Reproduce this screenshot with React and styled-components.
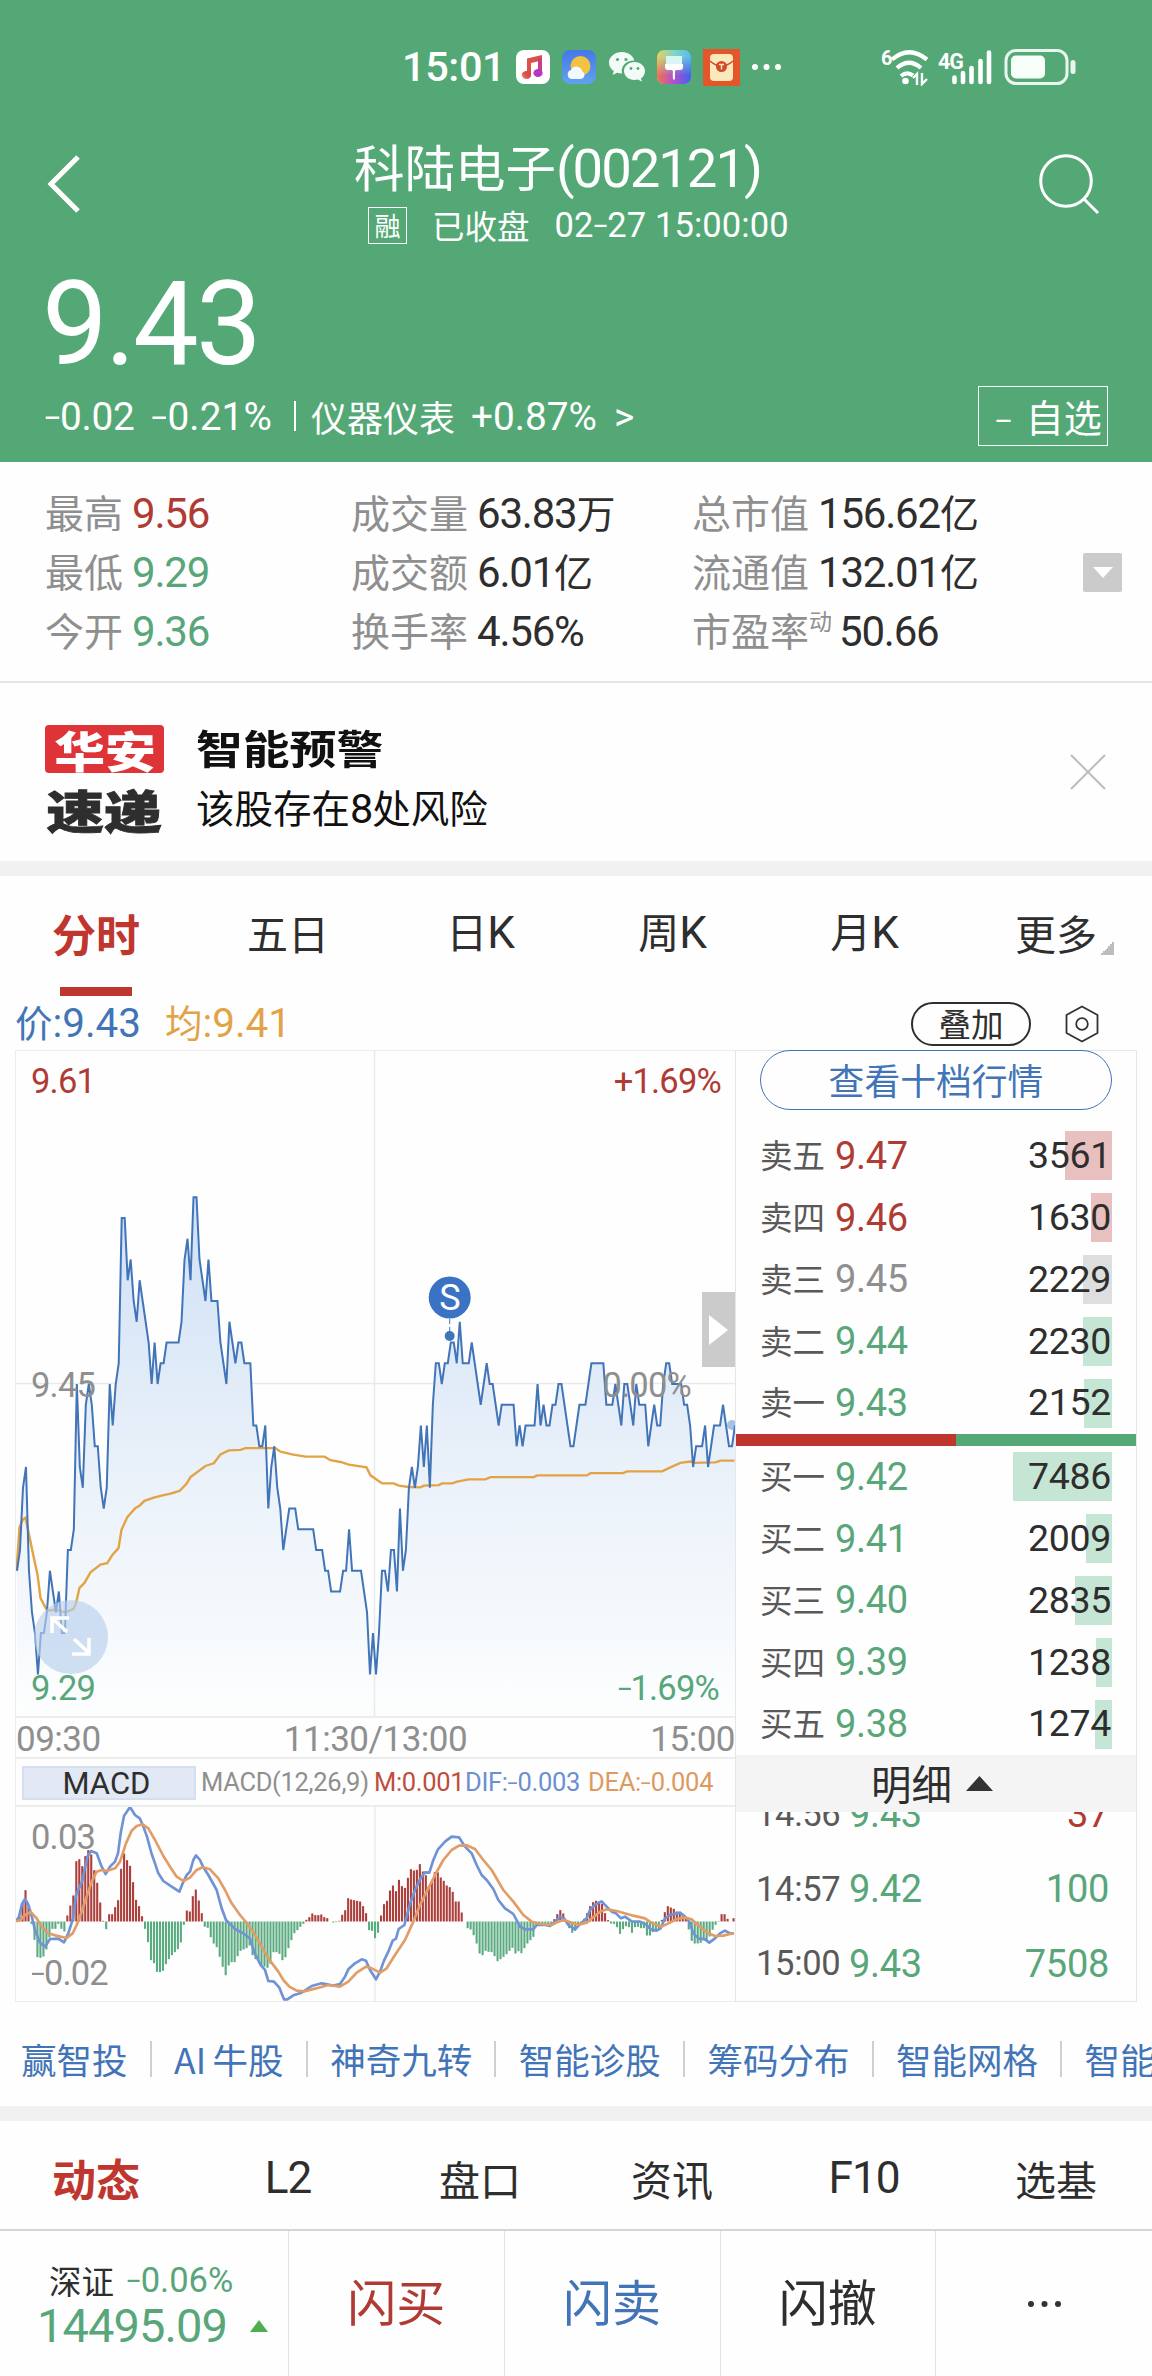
import styled, { createGlobalStyle, css } from "styled-components";

const colors = {
  green: "#53a876",
  greenText: "#58a679",
  red: "#bf362f",
  redText: "#b03a34",
  blue: "#4274b8",
  orange: "#e2a346",
  dark: "#2e2e2e",
  grey: "#8f8f8f",
  line: "#ededed",
};

const GlobalStyle = createGlobalStyle`
  * {
    box-sizing: border-box;
  }
  body {
    margin: 0;
    background: #fefefe;
    color: ${colors.dark};
    font-family: "Noto Sans CJK SC", sans-serif;
    line-height: 1;
    white-space: nowrap;
  }
  svg {
    display: block;
    flex: none;
  }
`;

const Page = styled.div`
  width: 1152px;
  height: 2376px;
  overflow: hidden;
  display: flex;
  flex-direction: column;
`;

const Num = styled.span`
  font-family: Roboto, sans-serif;
  font-size: ${({ $size }) => ($size ? `${$size}px` : "1.077em")};
  letter-spacing: ${({ $ls = 0 }) => $ls}px;
  color: ${({ $color }) => $color || "inherit"};
  font-weight: ${({ $weight }) => $weight || "inherit"};
`;

const Dash = styled.span`
  display: inline-block;
  transform: scale(1.45, 0.85);
  margin: 0 0.06em;
`;

/* ---------- header ---------- */

const Header = styled.header`
  height: 462px;
  background: ${colors.green};
  color: #fff;
`;

const StatusBar = styled.div`
  height: 132px;
  padding: 2px 75px 0 402px;
  display: flex;
  align-items: center;
`;

const Clock = styled.div`
  width: 114px;
  font-family: Roboto, sans-serif;
  font-size: 41.5px;
  font-weight: 500;
  letter-spacing: -0.4px;
`;

const AppIcons = styled.div`
  display: flex;
  align-items: center;
  gap: 12.3px;
`;

const Signals = styled.div`
  margin-left: auto;
  display: flex;
  align-items: center;
`;

const NavBar = styled.div`
  height: 124px;
  padding: 0 52px 0 46px;
  display: flex;
  justify-content: space-between;
`;

const NavIcon = styled.div`
  padding-top: ${({ $top }) => $top}px;
`;

const TitleBlock = styled.div`
  flex: 1;
  padding-left: 273px;
`;

const Title = styled.div`
  height: 71px;
  font-size: 50.5px;
  line-height: 67px;
`;

const SubTitle = styled.div`
  display: flex;
  align-items: center;
  height: 44px;
  padding-left: 14px;
  font-size: 32.5px;
`;

const Badge = styled.span`
  width: 39px;
  height: 37px;
  margin-right: 25px;
  border: 1px solid #fff;
  display: flex;
  align-items: center;
  justify-content: center;
  font-size: 26px;
`;

const SubTime = styled.span`
  margin-left: 25px;
`;

const BigPrice = styled.div`
  height: 124px;
  padding-left: 42px;
  font-family: Roboto, sans-serif;
  font-size: 117px;
  line-height: 136px;
  letter-spacing: -2.8px;
`;

const ChangeRow = styled.div`
  height: 70px;
  padding: 2px 44px 0 45px;
  display: flex;
  align-items: center;
  font-size: 36px;
`;

const ChangeItem = styled.span`
  width: ${({ $w }) => ($w ? `${$w}px` : "auto")};
`;

const Separator = styled.i`
  width: 2px;
  height: 30px;
  margin: 0 15px 0 6px;
  background: #fff;
`;

const WatchButton = styled.div`
  margin-left: auto;
  width: 130px;
  height: 60px;
  padding-left: 11px;
  border: 1px solid #fff;
  display: flex;
  align-items: center;
  justify-content: center;
  gap: 13px;
  font-size: 38px;
`;

/* ---------- stats ---------- */

const Stats = styled.section`
  height: 221px;
  padding: 2px 30px 0 45px;
  border-bottom: 2px solid #e5e5e5;
  display: flex;
  align-items: center;
`;

const StatGrid = styled.div`
  flex: 1;
  display: grid;
  grid-template-columns: 306px 341px auto;
  grid-auto-rows: 59.3px;
  align-items: center;
  font-size: 39px;
`;

const Stat = styled.div`
  display: flex;
  align-items: baseline;
  color: ${({ $color }) => $color || colors.dark};
`;

const StatLabel = styled.span`
  color: ${colors.grey};
  margin-right: ${({ $tight }) => ($tight ? 7 : 9)}px;
`;

const Sup = styled.sup`
  font-size: 23px;
  line-height: 0;
  vertical-align: 16px;
`;

const MoreBox = styled.div`
  width: 39px;
  height: 39px;
  border-radius: 2px;
  background: #cbcbcb;
  display: flex;
  align-items: center;
  justify-content: center;
`;

/* ---------- alert ---------- */

const Alert = styled.section`
  height: 178px;
  padding: 0 46px 0 45px;
  display: flex;
  align-items: center;
`;

const Logo = styled.div`
  width: 119px;
  margin: 15px 32px 0 0;
  font-weight: 900;
`;

const LogoTop = styled.div`
  height: 48px;
  border-radius: 4px;
  background: #df3437;
  color: #fff;
  display: flex;
  align-items: center;
  justify-content: center;
  font-size: 43px;

  span {
    transform: scaleX(1.18);
  }
`;

const LogoBottom = styled.div`
  height: 50px;
  margin-top: 11px;
  display: flex;
  align-items: center;
  justify-content: center;
  font-size: 45px;

  span {
    transform: scaleX(1.28);
    -webkit-text-stroke: 0.8px ${colors.dark};
  }
`;

const AlertText = styled.div`
  flex: 1;
  margin-top: 13px;
  color: #111;
  font-size: 38.5px;
`;

const AlertTitle = styled.div`
  margin-bottom: 20px;
  font-size: 40px;
  font-weight: 700;
  transform: scaleX(1.17);
  transform-origin: left;
`;

const Band = styled.div`
  height: 15px;
  background: #f1f1f1;
`;

/* ---------- tabs ---------- */

const Tabs = styled.nav`
  height: ${({ $h }) => $h}px;
  padding-top: ${({ $pt }) => $pt}px;
  display: grid;
  grid-template-columns: repeat(6, 1fr);
`;

const Tab = styled.div`
  position: relative;
  display: flex;
  align-items: center;
  justify-content: center;
  font-size: 41px;

  ${({ $active }) =>
    $active &&
    css`
      color: ${colors.red};
      font-weight: 700;
      font-size: 44px;
    `}
`;

const Underline = styled.i`
  position: absolute;
  left: 60px;
  bottom: -9px;
  width: 72px;
  height: 9px;
  background: ${colors.red};
`;

const Corner = styled.i`
  position: absolute;
  right: 38px;
  bottom: 32px;
  width: 14px;
  height: 14px;
  background: linear-gradient(135deg, transparent 50%, #bdbdbd 50%);
`;

const QuoteRow = styled.div`
  height: 63px;
  padding: 10px 53px 0 15px;
  display: flex;
  align-items: center;
  font-size: 37.5px;
`;

const Quote = styled.span`
  width: 150px;
  color: ${({ $color }) => $color};
`;

const OverlayPill = styled.div`
  width: 120px;
  height: 44px;
  margin: 0 34px 0 auto;
  border: 2px solid ${colors.dark};
  border-radius: 22px;
  display: flex;
  align-items: center;
  justify-content: center;
  font-size: 32.5px;
`;

/* ---------- chart + book ---------- */

const Board = styled.section`
  height: 952px;
  padding: 0 15px;
  display: flex;
`;

const ChartColumn = styled.div`
  width: 720px;
  border: 1px solid ${colors.line};
  border-width: 1px 0 1px 1px;
  display: flex;
  flex-direction: column;
`;

const ChartBox = styled.div`
  position: relative;
  height: ${({ $h }) => $h}px;
`;

const ChartLabel = styled.span`
  position: absolute;
  left: ${({ $left }) => ($left != null ? `${$left}px` : "auto")};
  right: ${({ $right }) => ($right != null ? `${$right}px` : "auto")};
  top: ${({ $top }) => $top}px;
  font-family: Roboto, sans-serif;
  font-size: 34.5px;
  letter-spacing: -0.8px;
  color: ${({ $color }) => $color || colors.grey};
`;

const TimeAxis = styled.div`
  height: 43px;
  padding-top: 4px;
  border: solid ${colors.line};
  border-width: 2px 0;
  display: flex;
  align-items: center;
  justify-content: space-between;
  font-family: Roboto, sans-serif;
  font-size: 35px;
  letter-spacing: -0.5px;
  color: ${colors.grey};
`;

const MacdRow = styled.div`
  height: 49px;
  padding: 2px 0 0 6px;
  border-bottom: 2px solid ${colors.line};
  display: flex;
  align-items: center;
  font-family: Roboto, sans-serif;
  font-size: 25.5px;
`;

const MacdButton = styled.div`
  width: 174px;
  height: 34px;
  margin: -1px 5px 0 0;
  padding: 1px 5px 0 0;
  border: 2px solid #d5dff0;
  background: #e3e8f5;
  display: flex;
  align-items: center;
  justify-content: center;
  font-size: 31px;
`;

const MacdValue = styled.span`
  width: ${({ $w }) => $w}px;
  letter-spacing: -0.3px;
  color: ${({ $color }) => $color};
`;

const Book = styled.div`
  width: 402px;
  border: 1px solid #e6e6e6;
  display: flex;
  flex-direction: column;
`;

const BookButton = styled.div`
  width: 352px;
  height: 60px;
  margin: -1px 0 15px 24px;
  flex: none;
  border: 1px solid ${colors.blue};
  border-radius: 30px;
  display: flex;
  align-items: center;
  justify-content: center;
  font-size: 35.8px;
  color: ${colors.blue};
`;

const Level = styled.div`
  height: 61.8px;
  padding: 0 24px;
  display: flex;
  align-items: center;
  font-size: 32.5px;
  color: #595959;
`;

const LevelName = styled.span`
  padding-bottom: 3px;
`;

const LevelPrice = styled.span`
  margin-left: 10px;
  font-family: Roboto, sans-serif;
  font-size: 38px;
  letter-spacing: -0.3px;
  color: ${({ $color }) => $color};
`;

const Volume = styled.div`
  margin-left: auto;
  height: 49px;
  padding-right: 1px;
  display: flex;
  align-items: center;
  justify-content: flex-end;
  width: 110px;
  font-family: Roboto, sans-serif;
  font-size: 37.5px;
  letter-spacing: -0.3px;
  color: ${colors.dark};
  background: linear-gradient(${({ $bg }) => `${$bg}, ${$bg}`}) no-repeat right /
    ${({ $w }) => $w}px 100%;
`;

const Ratio = styled.div`
  height: 12px;
  flex: none;
  background: linear-gradient(
    to right,
    ${colors.red} 55%,
    ${colors.green} 55%
  );
`;

const DetailBar = styled.div`
  height: 57px;
  padding-right: 8px;
  flex: none;
  background: #f4f4f4;
  display: flex;
  align-items: center;
  justify-content: center;
  gap: 14px;
  font-size: 40.5px;
`;

const Details = styled.div`
  flex: 1;
  overflow: hidden;
`;

const DetailList = styled.div`
  margin-top: -35px;
`;

const Detail = styled.div`
  height: 74.7px;
  padding: 0 27px 0 20px;
  display: flex;
  align-items: center;
  font-family: Roboto, sans-serif;
  font-size: 38px;
  letter-spacing: -0.3px;
  color: ${colors.greenText};
`;

const DetailTime = styled.span`
  width: 93px;
  font-size: 34.5px;
  color: #595959;
`;

const DetailVolume = styled.span`
  margin-left: auto;
  color: ${({ $color }) => $color};
`;

/* ---------- bottom ---------- */

const Links = styled.nav`
  height: 104px;
  padding: 10px 0 0 21px;
  overflow: hidden;
  display: flex;
  align-items: center;
  font-size: 35.5px;
  color: ${colors.blue};
`;

const LinkItem = styled.span`
  flex: none;
  display: flex;
  align-items: center;
  word-spacing: -1.5px;

  &:not(:last-child)::after {
    content: "";
    width: 2px;
    height: 36px;
    margin: 0 22.3px;
    background: #cfcfcf;
  }
`;

const TradeBar = styled.footer`
  flex: 1;
  border-top: 2px solid #d4d4d4;
  display: grid;
  grid-template-columns: 289px repeat(4, 1fr);
`;

const TradeCell = styled.div`
  padding-bottom: ${({ $pb = 8 }) => $pb}px;
  border-right: 1px solid #e3e3e3;
  display: flex;
  align-items: center;
  justify-content: center;
  font-size: 49px;
  color: ${({ $color }) => $color};

  &:last-child {
    border-right: 0;
  }
`;

const IndexCell = styled.div`
  border-right: 1px solid #e3e3e3;
  padding: 32px 0 0 37px;
`;

const IndexName = styled.div`
  padding-left: 12px;
  height: 34px;
  display: flex;
  align-items: center;
  gap: 13px;
  font-size: 32.5px;
`;

const IndexValue = styled.div`
  height: 56px;
  display: flex;
  align-items: center;

  svg {
    margin: 2px 0 0 23px;
  }
`;

/* ---------- data ---------- */

const stats = [
  ["最高", "9.56", "", colors.redText],
  ["成交量", "63.83", "万"],
  ["总市值", "156.62", "亿"],
  ["最低", "9.29", "", colors.greenText],
  ["成交额", "6.01", "亿"],
  ["流通值", "132.01", "亿"],
  ["今开", "9.36", "", colors.greenText],
  ["换手率", "4.56%", ""],
  ["市盈率", "50.66", "", null, "动"],
];

const tone = {
  up: [colors.redText, "#e8c0c0"],
  flat: [colors.grey, "#dedede"],
  down: [colors.greenText, "#c6e6d5"],
};

const asks = [
  ["卖五", "9.47", "3561", "up", 47],
  ["卖四", "9.46", "1630", "up", 21],
  ["卖三", "9.45", "2229", "flat", 29],
  ["卖二", "9.44", "2230", "down", 29],
  ["卖一", "9.43", "2152", "down", 28],
];

const bids = [
  ["买一", "9.42", "7486", "down", 99],
  ["买二", "9.41", "2009", "down", 26],
  ["买三", "9.40", "2835", "down", 37],
  ["买四", "9.39", "1238", "down", 16],
  ["买五", "9.38", "1274", "down", 17],
];

const details = [
  ["14:56", "9.43", "37", colors.redText],
  ["14:57", "9.42", "100", colors.greenText],
  ["15:00", "9.43", "7508", colors.greenText],
];

// one value a minute, in cents away from 9.45
const ticks = [
  -9, -8, -5, -4, -9, -11, -12, -14, -12, -12, -11, -9, -10, -11, -10, -12,
  -12, -8, -8, -7, 0, -4, -5, -1, 0, -1, -3, -3, -5, -6, -5, 0, -2, 0, 1, 8, 8,
  5, 6, 4, 3, 5, 4, 3, 2, 0, 2, 0, 1, 1, 2, 2, 2, 2, 2, 3, 6, 7, 5, 9, 9, 6, 5,
  4, 6, 4, 4, 4, 2, 1, 0, 3, 2, 1, 2, 2, 1, 1, 1, -2, -2, -3, -3, -2, -6, -4,
  -3, -5, -6, -8, -7, -6, -6, -6, -7, -7, -7, -7, -7, -7, -8, -8, -8, -9, -9,
  -10, -10, -10, -10, -9, -9, -7, -9, -9, -9, -9, -10, -11, -14, -12, -14, -12,
  -9, -9, -10, -8, -8, -10, -6, -9, -8, -5, -4, -5, -4, -2, -4, -2, -5, -1, 1,
  1, 0, 1, 1, 2, 2, 1, 3, 1, 1, 1, 2, 1, 0, -1, 0, 1, 0, 0, -1, -2, -1, -1, -1,
  -1, -1, -3, -2, -3, -2, -2, -2, -2, 0, -2, -1, -2, -2, -1, -1, 0, 0, -1, -2,
  -3, -3, -2, -1, -1, -1, 0, 1, 1, 1, 1, 1, -1, -1, -1, 0, -1, -2, 0, 0, -1,
  -2, 0, -1, -1, -1, -3, -2, -1, -2, -2, 0, 1, 1, 0, 0, 0, 0, -1, -1, -2, -4,
  -3, -3, -3, -2, -4, -3, -2, -2, -2, -1, -2, -3, -3, -2,
];

// average price line, on its own finer grid
const average =
  "48,1186 57,1090 66,1073 75,1068 84,1100 102,1165 111,1195 120,1248 130,1262 140,1276 165,1274 195,1280 220,1272 228,1255 237,1225 252,1214 270,1190 300,1173 320,1170 335,1152 354,1136 363,1095 381,1066 405,1046 417,1041 432,1030 460,1023 480,1019 510,1014 537,1008 558,992 570,977 615,952 640,946 660,926 685,917 720,916 735,912 825,912 840,920 875,926 915,931 972,931 990,939 1020,943 1045,949 1098,955 1110,973 1145,991 1180,991 1195,996 1225,999 1260,1000 1270,996 1315,995 1325,991 1355,991 1370,987 1405,982 1455,982 1470,977 1600,977 1610,973 1760,973 1770,968 1868,968 1880,964 1985,964 2010,955 2040,945 2070,942 2080,945 2145,944 2160,940 2202,940";

const histogram = [
  2, 15, 57, 94, 45, -7, -55, -107, -109, -105, -84, -48, -22, -22, -7, -22,
  -30, 18, 48, 78, 181, 187, 166, 196, 214, 201, 154, 116, 57, 2, -23, 22, 22,
  43, 64, 158, 204, 184, 167, 118, 65, 46, 16, -22, -62, -116, -125, -151,
  -152, -148, -128, -113, -101, -92, -83, -63, -10, 33, 30, 76, 96, 63, 25,
  -16, -19, -47, -66, -77, -106, -136, -161, -132, -122, -122, -104, -88, -84,
  -80, -72, -101, -113, -120, -130, -135, -139, -127, -92, -92, -97, -116,
  -107, -80, -56, -35, -26, -16, -7, 5, 13, 24, 19, 19, 21, 13, 10, 0, -3, -2,
  2, 20, 34, 70, 66, 64, 62, 60, 46, 25, -26, -28, -50, -34, 18, 52, 62, 93,
  108, 91, 125, 106, 101, 131, 157, 153, 155, 172, 150, 139, 105, 120, 148,
  148, 132, 122, 108, 103, 89, 60, 60, 27, 0, -20, -24, -41, -66, -96, -101,
  -88, -91, -92, -104, -119, -113, -106, -98, -88, -79, -96, -89, -95, -80,
  -66, -56, -46, -12, -10, -8, -12, -15, -8, 7, 22, 34, 24, 4, -20, -34, -28,
  -14, -6, 8, 25, 46, 58, 62, 60, 53, 25, 4, -6, -7, -17, -37, -23, -14, -17,
  -34, -17, -16, -20, -20, -42, -42, -32, -28, -22, 5, 28, 46, 42, 38, 30, 27,
  16, 10, -24, -58, -66, -66, -64, -50, -58, -45, -25, -10, 1, 22, 22, 8, 0,
  10,
];

const dif =
  "48,664 57,650 66,612 75,597 84,612 93,640 105,690 120,728 135,740 150,717 175,716 192,727 205,700 219,655 228,585 246,545 262,470 273,453 290,460 305,500 317,522 330,500 345,485 354,460 362,400 372,348 390,321 405,345 420,356 432,385 441,410 455,462 465,490 475,520 490,543 515,560 538,575 548,550 560,525 570,515 580,480 588,466 600,480 610,502 625,525 650,570 665,625 678,660 705,687 730,700 750,716 762,755 782,795 795,810 805,843 822,845 838,863 852,898 862,898 880,886 905,878 935,858 965,850 1000,857 1020,852 1035,830 1045,808 1065,790 1085,778 1098,782 1110,810 1128,838 1140,815 1152,782 1165,755 1178,722 1188,716 1196,687 1213,675 1230,612 1245,570 1260,538 1275,517 1288,518 1300,480 1314,448 1335,425 1355,410 1377,412 1395,440 1415,460 1430,495 1445,525 1460,540 1480,567 1495,600 1515,625 1540,642 1560,680 1575,688 1600,688 1610,675 1635,674 1650,678 1665,665 1680,650 1692,655 1705,675 1725,688 1745,668 1760,655 1770,630 1785,614 1805,604 1820,620 1835,635 1848,640 1863,655 1875,650 1895,664 1920,665 1940,675 1952,688 1970,692 1982,685 1995,655 2010,645 2040,638 2055,650 2068,665 2080,700 2095,715 2115,718 2128,728 2145,715 2160,700 2175,692 2190,700 2202,700";

const dea =
  "48,664 62,660 75,645 92,636 110,655 125,680 145,700 165,706 200,714 218,700 230,675 245,635 260,590 275,545 290,515 305,510 320,513 345,505 360,485 378,430 395,392 410,378 428,373 445,385 465,420 490,468 510,500 530,530 550,543 570,533 590,510 608,502 630,508 655,535 675,570 695,610 720,645 745,675 765,705 785,740 805,775 835,815 850,840 868,860 890,872 912,874 945,866 985,855 1020,860 1045,845 1070,818 1098,800 1115,805 1140,818 1160,805 1185,765 1215,720 1240,665 1260,615 1285,565 1305,525 1330,480 1355,450 1377,437 1400,436 1425,447 1450,480 1475,510 1510,570 1540,605 1570,645 1595,665 1620,672 1655,675 1675,665 1692,660 1715,668 1735,674 1760,668 1780,652 1800,635 1820,628 1850,633 1900,647 1935,655 1960,672 1985,680 2010,668 2030,657 2055,653 2075,658 2100,680 2125,700 2145,708 2170,707 2190,702 2202,700";

const links = [
  "赢智投",
  "AI 牛股",
  "神奇九转",
  "智能诊股",
  "筹码分布",
  "智能网格",
  "智能条件",
];

/* ---------- drawings ---------- */

const MusicIcon = () => (
  <svg width="34" height="34" viewBox="0 0 34 34">
    <defs>
      <linearGradient id="note" x1="0" y1="1" x2="1" y2="0.3">
        <stop offset="0" stopColor="#f6a54b" />
        <stop offset="0.5" stopColor="#e0504f" />
        <stop offset="1" stopColor="#d7493d" />
      </linearGradient>
    </defs>
    <rect width="34" height="34" rx="8" fill="#fff" />
    <path d="M11 8.5 26 5v5.5L15 13v12h-4z" fill="#d9534a" />
    <path d="M22 8h4v15h-4z" fill="#c93f86" />
    <ellipse cx="10.5" cy="25" rx="4.7" ry="4" fill="url(#note)" />
    <ellipse cx="22" cy="23" rx="4.6" ry="4" fill="#b935c0" />
  </svg>
);

const WeatherIcon = () => (
  <svg width="34" height="34" viewBox="0 0 34 34">
    <defs>
      <linearGradient id="sky" x1="0" y1="0" x2="0" y2="1">
        <stop offset="0" stopColor="#4677e6" />
        <stop offset="1" stopColor="#5fa3ee" />
      </linearGradient>
    </defs>
    <rect width="34" height="34" rx="8" fill="url(#sky)" />
    <circle cx="18.5" cy="16" r="10" fill="#f4c243" />
    <path
      d="M10 29a4.6 4.6 0 0 1-1-9 6 6 0 0 1 11.3 1.5A4 4 0 0 1 19 29z"
      fill="#f4f8ff"
    />
  </svg>
);

const WechatIcon = () => (
  <svg width="36" height="30" viewBox="0 0 36 30">
    <path
      d="M13 0C5.8 0 0 4.8 0 10.8c0 3.4 1.9 6.4 4.8 8.3L3.600 23l4.5-2.3c1.5.4 3 .7 4.9.7C11.5 14 17 8.6 25.3 8.6 24.3 3.7 19.2 0 13 0z"
      fill="#f3fbf6"
    />
    <path
      d="M36 19c0-5-4.7-9-10.5-9S15 14 15 19s4.700 9 10.5 9c1.3 0 2.5-.2 3.6-.5L33 29.8l-1-3.3C34.5 24.8 36 22 36 19z"
      fill="#f3fbf6"
    />
    <g fill={colors.green}>
      <circle cx="8.5" cy="7.5" r="1.6" />
      <circle cx="17" cy="7.5" r="1.6" />
      <circle cx="22" cy="16.5" r="1.4" />
      <circle cx="29" cy="16.5" r="1.4" />
    </g>
  </svg>
);

const BrushIcon = () => (
  <svg width="34" height="34" viewBox="0 0 34 34">
    <defs>
      <linearGradient id="paintTop" x1="0" y1="0" x2="1" y2="0">
        <stop offset="0" stopColor="#e9cf5f" />
        <stop offset="0.5" stopColor="#7dd6c5" />
        <stop offset="1" stopColor="#5cb8ef" />
      </linearGradient>
      <linearGradient id="paintLow" x1="0" y1="0" x2="1" y2="0">
        <stop offset="0" stopColor="#f0744f" />
        <stop offset="0.5" stopColor="#b04fd0" />
        <stop offset="1" stopColor="#3f62ee" />
      </linearGradient>
      <linearGradient id="fade" x1="0" y1="0" x2="0" y2="1">
        <stop offset="0.2" stopColor="#fff" stopOpacity="0" />
        <stop offset="0.75" stopColor="#fff" />
      </linearGradient>
      <mask id="lower">
        <rect width="34" height="34" fill="url(#fade)" />
      </mask>
    </defs>
    <rect width="34" height="34" rx="7" fill="url(#paintTop)" />
    <rect width="34" height="34" rx="7" fill="url(#paintLow)" mask="url(#lower)" />
    <path d="M9 6h16v8H9z" fill="#d9f6f4" />
    <path
      d="M8 14h18v3q0 3-3 3h-3.500q-2 0-1.500 3v5q-1 4-2.200 0v-5q.5-3-1.500-3H11q-3 0-3-3z"
      fill="#fff"
    />
  </svg>
);

const EnvelopeIcon = () => (
  <svg width="37" height="37" viewBox="0 0 37 37">
    <rect width="37" height="37" fill="#e4562a" />
    <rect x="7" y="5" width="23" height="27" rx="4" fill="#fbe9bd" />
    <path d="M7 12q11.5 10 23 0" fill="none" stroke="#c94a2b" strokeWidth="1.5" />
    <circle cx="18.5" cy="17.5" r="5.5" fill="#d24a28" />
    <path d="M16 15.500h5M18.500 15.500v5" stroke="#fbe9bd" strokeWidth="1.4" />
  </svg>
);

const Dots = ({ color, gap = 11.5, r = 3 }) => (
  <svg width={gap * 2 + r * 2} height={r * 2}>
    {[0, 1, 2].map((i) => (
      <circle key={i} cx={r + i * gap} cy={r} r={r} fill={color} />
    ))}
  </svg>
);

const SignalIcons = () => (
  <svg width="196" height="38" viewBox="881 47 196 38" fill="none">
    <g
      fill="#fff"
      fontFamily="Roboto, sans-serif"
      fontWeight="700"
      letterSpacing="-1"
    >
      <text x="881" y="64" fontSize="20">
        6
      </text>
      <text x="938" y="68" fontSize="22.5" textLength="25" lengthAdjust="spacingAndGlyphs">
        4G
      </text>
    </g>
    <g stroke="#fff" strokeWidth="4.2">
      <path d="M892 58.500Q909 44 927 58.500" />
      <path d="M897 67Q909 56.500 921 67" />
      <path d="M901 75Q907 70 913 74.500" />
    </g>
    <circle cx="905.500" cy="80" r="3.3" fill="#fff" />
    <path d="M913 77l4-4v11M922 72v11l5-5" stroke="#fff" strokeWidth="2.4" />
    <g stroke="#fff" strokeWidth="4.6" strokeLinecap="round">
      <path d="M954.500 76.500v4.500M963 72v9M971.500 67v14M980.500 60v21M989 51.500V81" />
    </g>
    <rect
      x="1006"
      y="49.5"
      width="61"
      height="33"
      rx="10"
      stroke="#e9f6ee"
      strokeWidth="3"
    />
    <rect x="1011" y="54.5" width="34" height="23" rx="5" fill="#f8fffb" />
    <rect x="1070.5" y="59" width="5" height="14" rx="2.5" fill="#e9f6ee" />
  </svg>
);

const BackIcon = () => (
  <svg width="35" height="58" viewBox="0 0 35 58">
    <path d="M32 2 5 29l27 27" fill="none" stroke="#fff" strokeWidth="5" />
  </svg>
);

const SearchIcon = () => (
  <svg width="62" height="62" viewBox="0 0 62 62" fill="none" stroke="#fff">
    <circle cx="28" cy="28" r="25.3" strokeWidth="3" />
    <path d="M45.500 45.500 60 60" strokeWidth="3" />
  </svg>
);

const Triangle = ({ w, h, color, flip }) => (
  <svg width={w} height={h}>
    <path
      d={flip ? `M0 0h${w}L${w / 2} ${h}z` : `M0 ${h}h${w}L${w / 2} 0z`}
      fill={color}
    />
  </svg>
);

const CloseIcon = () => (
  <svg width="36" height="36" viewBox="0 0 36 36">
    <path d="M1 1l34 34M35 1 1 35" stroke="#bdbdbd" strokeWidth="2" />
  </svg>
);

const HexIcon = () => (
  <svg width="34" height="38" viewBox="0 0 34 38" fill="none" stroke="#333">
    <path d="M17 1.500 32.500 10v18L17 36.500 1.500 28V10z" strokeWidth="1.8" />
    <circle cx="17" cy="19" r="5.8" strokeWidth="1.8" />
  </svg>
);

const priceX = (i) => (i * 718) / (ticks.length - 1) + 1;
const priceY = (level) => 333 - level * 20.75;

const PriceChart = () => {
  const line = ticks.map((t, i) => `${priceX(i)},${priceY(t)}`).join(" ");
  return (
    <svg width="719" height="665" viewBox="0 0 719 665" fill="none">
      <defs>
        <linearGradient
          id="area"
          gradientUnits="userSpaceOnUse"
          x1="0"
          y1="140"
          x2="0"
          y2="665"
        >
          <stop offset="0" stopColor="#cfe0f7" />
          <stop offset="0.5" stopColor="#e8f0f9" />
          <stop offset="1" stopColor="#fdfefe" />
        </linearGradient>
      </defs>
      <polygon points={`1,665 ${line} 719,665`} fill="url(#area)" />
      <path d="M0 332.500h719M358.500 0v665" stroke="#e8eaec" strokeWidth="1.5" />
      <g transform="translate(-15.500 -10) scale(0.3333 0.4464)">
        <polyline
          points={average}
          stroke={colors.orange}
          strokeWidth="2.4"
          vectorEffect="non-scaling-stroke"
        />
      </g>
      <polyline points={line} stroke={colors.blue} strokeWidth="2" />
      <path d="M433.700 268v16" stroke={colors.blue} strokeDasharray="5 3" />
      <circle cx="433.7" cy="285" r="5" fill={colors.blue} />
      <circle cx="433.7" cy="246.5" r="21" fill="#3b73c4" />
      <circle cx="716" cy="374" r="5" fill="#4a86cf" opacity="0.5" />
      <circle cx="55" cy="586" r="37" fill="#b9cfec" opacity="0.65" />
      <g stroke="#fff" strokeWidth="3.5">
        <path d="M51 581 36 567M36 582v-15h17" />
        <path d="M58 588l15 14M56 603h17v-16" />
      </g>
    </svg>
  );
};

const Marker = styled.span`
  position: absolute;
  left: 413px;
  top: 226px;
  width: 42px;
  line-height: 42px;
  text-align: center;
  font-family: Roboto, sans-serif;
  font-size: 36px;
  color: #fff;
`;

const SideToggle = styled.div`
  position: absolute;
  right: 0;
  top: 241px;
  width: 33px;
  height: 75px;
  background: #cbcbcb;
  display: flex;
  align-items: center;
  justify-content: center;
`;

const MacdChart = () => (
  <svg width="719" height="194" viewBox="0 0 719 194" fill="none">
    <path d="M359 0v194" stroke="#ececec" strokeWidth="1.5" />
    {histogram.map((v, i) => (
      <rect
        key={i}
        x={(i * 717) / (histogram.length - 1) - 0.5}
        y={v > 0 ? 114.5 - v / 3 : 114.5}
        width="2.1"
        height={Math.abs(v) / 3}
        fill={v > 0 ? "#ac3f3c" : "#5aab80"}
      />
    ))}
    <g
      transform="translate(-16 -107) scale(0.33333)"
      strokeLinejoin="round"
      strokeWidth="8"
    >
      <polyline points={dif} stroke="#6f93d4" />
      <polyline points={dea} stroke="#e29c66" />
    </g>
  </svg>
);

/* ---------- blocks ---------- */

const Levels = ({ rows }) =>
  rows.map(([name, price, volume, dir, w]) => (
    <Level key={name}>
      <LevelName>{name}</LevelName>
      <LevelPrice $color={tone[dir][0]}>{price}</LevelPrice>
      <Volume $bg={tone[dir][1]} $w={w}>
        {volume}
      </Volume>
    </Level>
  ));

const TopHeader = () => (
  <Header>
    <StatusBar>
      <Clock>15:01</Clock>
      <AppIcons>
        <MusicIcon />
        <WeatherIcon />
        <WechatIcon />
        <BrushIcon />
        <EnvelopeIcon />
        <Dots color="#fff" />
      </AppIcons>
      <Signals>
        <SignalIcons />
      </Signals>
    </StatusBar>
    <NavBar>
      <NavIcon $top={23}>
        <BackIcon />
      </NavIcon>
      <TitleBlock>
        <Title>
          科陆电子<Num $ls={-2}>(002121)</Num>
        </Title>
        <SubTitle>
          <Badge>融</Badge>
          已收盘
          <SubTime>
            <Num $size={34.5} $ls={0.1}>
              02
              <Dash>-</Dash>
              27 15:00:00
            </Num>
          </SubTime>
        </SubTitle>
      </TitleBlock>
      <NavIcon $top={21}>
        <SearchIcon />
      </NavIcon>
    </NavBar>
    <BigPrice>9.43</BigPrice>
    <ChangeRow>
      <ChangeItem $w={107}>
        <Num $ls={-0.3}>
          <Dash>-</Dash>
          0.02
        </Num>
      </ChangeItem>
      <ChangeItem $w={136}>
        <Num $ls={0.1}>
          <Dash>-</Dash>
          0.21%
        </Num>
      </ChangeItem>
      <Separator />
      <ChangeItem $w={160}>仪器仪表</ChangeItem>
      <ChangeItem $w={143}>
        <Num>+0.87%</Num>
      </ChangeItem>
      <ChangeItem>
        <Num>&gt;</Num>
      </ChangeItem>
      <WatchButton>
        <Dash>-</Dash>
        <span>自选</span>
      </WatchButton>
    </ChangeRow>
  </Header>
);

const App = () => (
  <>
    <GlobalStyle />
    <Page>
      <TopHeader />
      <Stats>
        <StatGrid>
          {stats.map(([label, value, unit, color, sup]) => (
            <Stat key={label} $color={color}>
              <StatLabel $tight={sup}>
                {label}
                {sup && <Sup>{sup}</Sup>}
              </StatLabel>
              <Num $ls={-1.2}>{value}</Num>
              {unit}
            </Stat>
          ))}
        </StatGrid>
        <MoreBox>
          <Triangle w={20} h={11} color="#fff" flip />
        </MoreBox>
      </Stats>
      <Alert>
        <Logo>
          <LogoTop>
            <span>华安</span>
          </LogoTop>
          <LogoBottom>
            <span>速递</span>
          </LogoBottom>
        </Logo>
        <AlertText>
          <AlertTitle>智能预警</AlertTitle>
          <div>
            该股存在<Num $ls={-1}>8</Num>处风险
          </div>
        </AlertText>
        <CloseIcon />
      </Alert>
      <Band />
      <Tabs $h={111} $pt={2}>
        <Tab $active>
          分时
          <Underline />
        </Tab>
        <Tab>五日</Tab>
        {["日", "周", "月"].map((unit) => (
          <Tab key={unit}>
            <span>
              {unit}
              <Num $ls={-1}>K</Num>
            </span>
          </Tab>
        ))}
        <Tab>
          更多
          <Corner />
        </Tab>
      </Tabs>
      <QuoteRow>
        <Quote $color={colors.blue}>
          价<Num>:9.43</Num>
        </Quote>
        <Quote $color={colors.orange}>
          均<Num>:9.41</Num>
        </Quote>
        <OverlayPill>叠加</OverlayPill>
        <HexIcon />
      </QuoteRow>
      <Board>
        <ChartColumn>
          <ChartBox $h={665}>
            <PriceChart />
            <Marker>S</Marker>
            <ChartLabel $left={15} $top={13} $color={colors.redText}>
              9.61
            </ChartLabel>
            <ChartLabel $right={14} $top={13} $color={colors.redText}>
              +1.69%
            </ChartLabel>
            <ChartLabel $left={15} $top={317}>
              9.45
            </ChartLabel>
            <ChartLabel $right={44} $top={317}>
              0.00%
            </ChartLabel>
            <ChartLabel $left={15} $top={620} $color={colors.greenText}>
              9.29
            </ChartLabel>
            <ChartLabel $right={16} $top={620} $color={colors.greenText}>
              <Dash>-</Dash>
              1.69%
            </ChartLabel>
            <SideToggle>
              <svg width="19" height="30">
                <path d="M0 0 19 15 0 30z" fill="#fff" />
              </svg>
            </SideToggle>
          </ChartBox>
          <TimeAxis>
            <span>09:30</span>
            <span>11:30/13:00</span>
            <span>15:00</span>
          </TimeAxis>
          <MacdRow>
            <MacdButton>MACD</MacdButton>
            <MacdValue $w={173} $color={colors.grey}>
              MACD(12,26,9)
            </MacdValue>
            <MacdValue $w={91} $color="#bf4d3c">
              M:0.001
            </MacdValue>
            <MacdValue $w={123} $color="#6b8fd0">
              DIF:
              <Dash>-</Dash>
              0.003
            </MacdValue>
            <MacdValue $w={131} $color="#dd9a60">
              DEA:
              <Dash>-</Dash>
              0.004
            </MacdValue>
          </MacdRow>
          <ChartBox $h={194}>
            <MacdChart />
            <ChartLabel $left={15} $top={13}>
              0.03
            </ChartLabel>
            <ChartLabel $left={15} $top={149}>
              <Dash>-</Dash>
              0.02
            </ChartLabel>
          </ChartBox>
        </ChartColumn>
        <Book>
          <BookButton>查看十档行情</BookButton>
          <Levels rows={asks} />
          <Ratio />
          <Levels rows={bids} />
          <DetailBar>
            明细
            <Triangle w={27} h={15} color="#333" />
          </DetailBar>
          <Details>
            <DetailList>
              {details.map(([time, price, volume, color]) => (
                <Detail key={time}>
                  <DetailTime>{time}</DetailTime>
                  {price}
                  <DetailVolume $color={color}>{volume}</DetailVolume>
                </Detail>
              ))}
            </DetailList>
          </Details>
        </Book>
      </Board>
      <Links>
        {links.map((text) => (
          <LinkItem key={text}>{text}</LinkItem>
        ))}
      </Links>
      <Band />
      <Tabs $h={108} $pt={6}>
        <Tab $active>动态</Tab>
        <Tab>
          <span>
            <Num $ls={-1}>L2</Num>
          </span>
        </Tab>
        <Tab>盘口</Tab>
        <Tab>资讯</Tab>
        <Tab>
          <span>
            <Num $ls={-1}>F10</Num>
          </span>
        </Tab>
        <Tab>选基</Tab>
      </Tabs>
      <TradeBar>
        <IndexCell>
          <IndexName>
            深证
            <Num $size={34.5} $color={colors.greenText}>
              <Dash>-</Dash>
              0.06%
            </Num>
          </IndexName>
          <IndexValue>
            <Num $size={47} $ls={-0.9} $color={colors.greenText}>
              14495.09
            </Num>
            <Triangle w={18} h={12} color="#4fae4f" />
          </IndexValue>
        </IndexCell>
        <TradeCell $color={colors.redText}>闪买</TradeCell>
        <TradeCell $color={colors.blue}>闪卖</TradeCell>
        <TradeCell $color={colors.dark}>闪撤</TradeCell>
        <TradeCell $pb={0}>
          <Dots color="#333" gap={13.5} r={3} />
        </TradeCell>
      </TradeBar>
    </Page>
  </>
);

export default App;
